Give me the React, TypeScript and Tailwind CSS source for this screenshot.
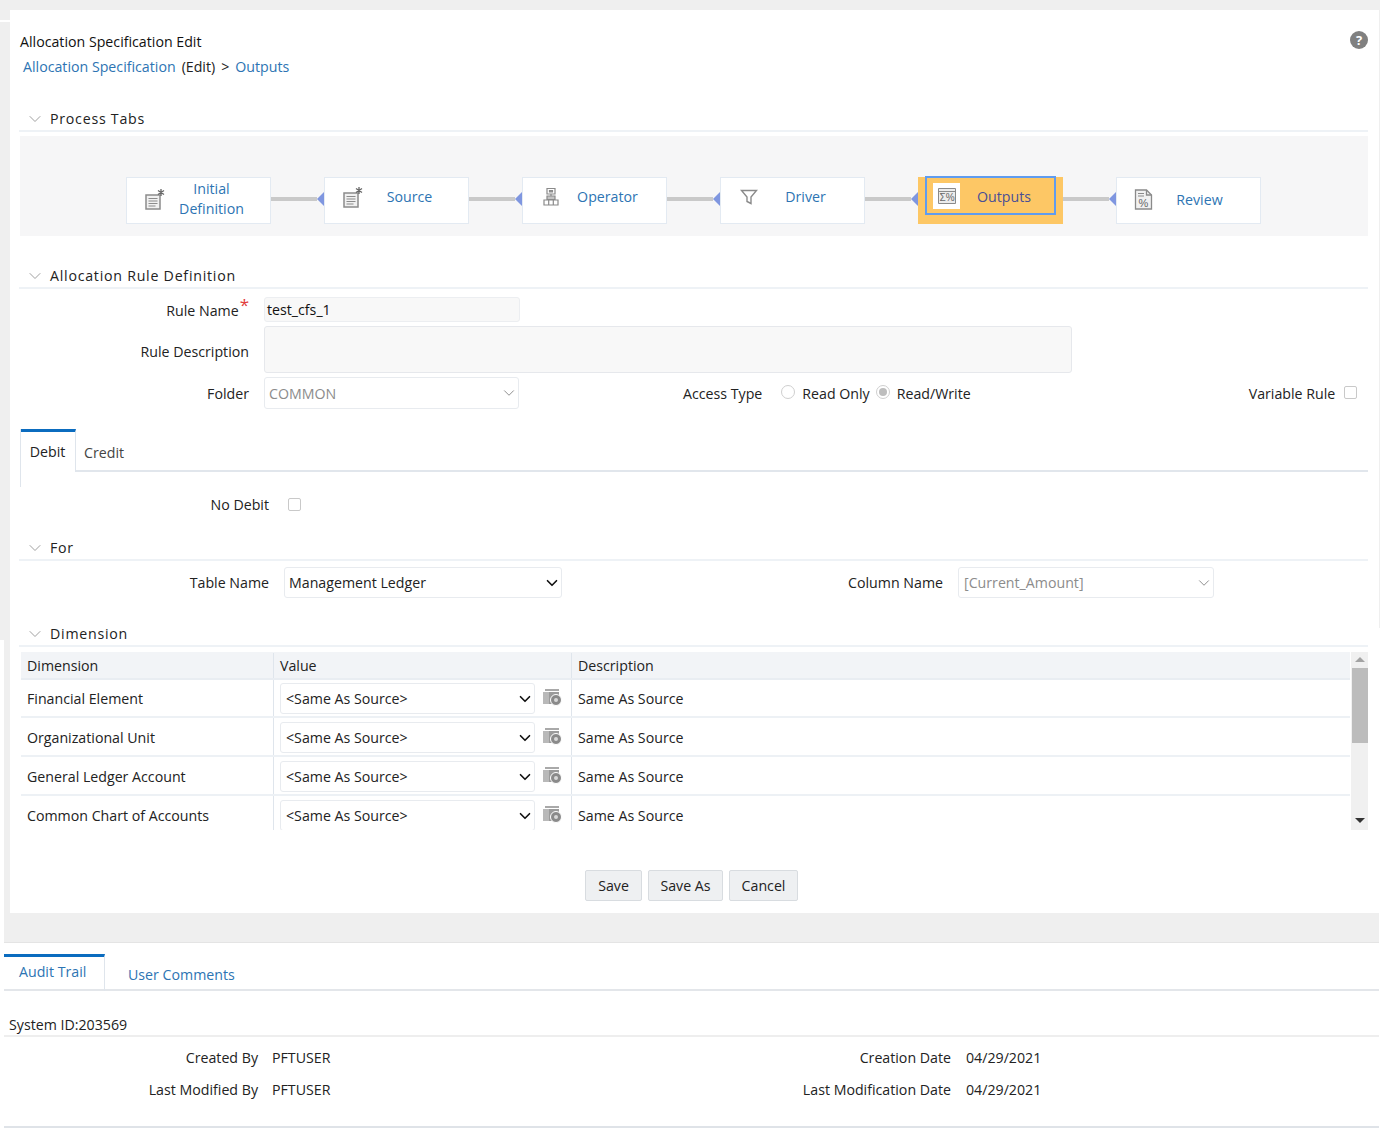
import React from 'react';
import { ChevronDown } from 'lucide-react';

const DocStar = () => (
  <svg width="22" height="22" viewBox="0 0 22 22" fill="none" stroke="#8c8c8c" strokeWidth="1.5">
    <path d="M2 7h14v14H2z" fill="#f1f1f1" />
    <path d="M4.5 10.5h9M4.5 13h9M4.5 15.5h9M4.5 18h7" strokeWidth="1.2" />
    <path d="M17 1v7M14 2.5l6 4M20 2.5l-6 4" stroke="#666" strokeWidth="1.3" />
  </svg>
);

const OperatorIcon = () => (
  <svg width="18" height="20" viewBox="0 0 18 20" fill="#9a9a9a" stroke="#8a8a8a" strokeWidth="1.2">
    <path d="M5 1.5h8v5.5H5z" fill="none" />
    <path d="M7.5 3.5h3v1.5h-3z" />
    <path d="M9 7v2" />
    <path d="M5 9h8v3.5H5z" fill="#c4c4c4" />
    <path d="M2 13h4.700v5H2zM6.700 13h4.600v5H6.700zM11.300 13H16v5h-4.700z" fill="none" />
  </svg>
);

const FunnelIcon = () => (
  <svg width="18" height="16" viewBox="0 0 18 16" fill="none" stroke="#8a8a8a" strokeWidth="1.4">
    <path d="M1.500 1.500h15L11 8v6.500l-4-2V8z" />
  </svg>
);

const OutputsIcon = () => (
  <div className="flex h-[26px] w-[27px] items-center justify-center bg-white">
    <svg width="18" height="16" viewBox="0 0 18 16" fill="none" stroke="#8a8a8a" strokeWidth="1">
      <path d="M.5.5h17v15H.5z" fill="#ececec" />
      <path d="M.5 3.500h17" />
      <text x="1.500" y="13" fontSize="10" fill="#666" stroke="none" fontFamily="'Liberation Sans', sans-serif">Σ%</text>
    </svg>
  </div>
);

const ReviewIcon = () => (
  <svg width="19" height="21" viewBox="0 0 19 21" fill="none" stroke="#8a8a8a" strokeWidth="1.300">
    <path d="M1.500 1h11l5 5v14h-16z" fill="#f1f1f1" />
    <path d="M12.500 1v5h5" />
    <path d="M4 4.500h6M4 7h6" strokeWidth="1" />
    <text x="4.500" y="17.500" fontSize="11" fill="#666" stroke="none" fontFamily="'Liberation Sans', sans-serif">%</text>
  </svg>
);

const FolderGear = () => (
  <svg width="20" height="18" viewBox="0 0 20 18" className="shrink-0">
    <path d="M3 1h14v2H3z" fill="#a9a9a9" />
    <path d="M1 4h16v12H1z" fill="#9b9b9b" />
    <path d="M1 4h6v12H1z" fill="#b9b9b9" />
    <circle cx="14" cy="12" r="5.500" fill="#8a8a8a" stroke="#fff" strokeWidth="1" />
    <circle cx="14" cy="12" r="2" fill="#d8d8d8" />
  </svg>
);

const SectionHeader = ({ title, className }: { title: string; className: string }) => (
  <div className={`flex items-center border-b-2 border-[#eef2f6] ${className}`}>
    <ChevronDown className="ml-[6px] h-[20px] w-[20px] text-[#a0a0a0]" strokeWidth={1.2} />
    <span className="ml-[5px] tracking-[0.75px] text-[#222]">{title}</span>
  </div>
);

const steps = [
  { label: 'Initial Definition', icon: <DocStar />, shift: 'pb-[4px]' },
  { label: 'Source', icon: <DocStar />, shift: 'pb-[8px]' },
  { label: 'Operator', icon: <OperatorIcon />, shift: 'pb-[8px]' },
  { label: 'Driver', icon: <FunnelIcon />, shift: 'pb-[7px]' },
];

const StepBox = ({ label, icon, shift, pad = 'pl-[16px]' }: { label: string; icon: React.ReactNode; shift: string; pad?: string }) => (
  <div className={`flex h-[47px] w-[145px] shrink-0 items-center border border-[#e3eaf2] bg-white text-[#2d74b3] ${shift} ${pad}`}>
    <div className="flex w-[24px] justify-center">{icon}</div>
    <div className="w-[88px] pl-[1px] text-center leading-[20px]">{label}</div>
  </div>
);

const Connector = () => (
  <div className="flex h-[47px] w-[53px] shrink-0 items-center pb-[3px]">
    <div className="h-[4px] w-[46px] bg-[#c9c9c9]" />
    <div className="h-[14px] w-[7px] bg-[#7f96e0] [clip-path:polygon(100%_0,100%_100%,0_50%)]" />
  </div>
);

const SelectBox = ({ value, className, muted }: { value: string; className: string; muted?: boolean }) => (
  <div className={`flex items-center justify-between rounded-[3px] border border-[#e8ebef] bg-white ${className} ${muted ? 'text-[#8c8c8c]' : 'text-[#222]'}`}>
    <span className="pt-[1px]">{value}</span>
    <ChevronDown className={`h-[18px] w-[18px] ${muted ? 'text-[#8c8c8c]' : 'text-[#111]'}`} strokeWidth={muted ? 1.3 : 2.2} />
  </div>
);

const CheckBox = () => <div className="h-[13px] w-[13px] rounded-[2px] border border-[#c9c9c9] bg-white" />;

const rows = [
  { name: 'Financial Element', h: 'h-[38px]', box: 'mt-[3px]', gear: 'mt-[8px]', text: 'pt-[2px]' },
  { name: 'Organizational Unit', h: 'h-[39px]', box: 'mt-[4px]', gear: 'mt-[9px]', text: 'pt-[3px]' },
  { name: 'General Ledger Account', h: 'h-[39px]', box: 'mt-[4px]', gear: 'mt-[9px]', text: 'pt-[3px]' },
  { name: 'Common Chart of Accounts', h: 'h-[34px]', box: 'mt-[4px]', gear: 'mt-[9px]', text: 'pt-[6px]' },
];

const App = () => {
  return (
    <div className="h-[1132px] w-[1380px] overflow-hidden bg-white font-['Open_Sans','Noto_Sans',sans-serif] text-[14.2px] text-[#222]">
      <div className="h-[10px] bg-[#efefef]" />

      <div className="flex h-[903px]">
        {/* left gutter */}
        <div className="flex w-[10px] shrink-0 flex-col">
          <div className="h-[10px] bg-[#efefef]" />
          <div className="h-[2px] bg-white" />
          <div className="h-[618px] bg-[#efefef]" />
          <div className="ml-[4px] flex-1 bg-[#efefef]" />
        </div>

        {/* main card */}
        <div className="w-[1358px] shrink-0 bg-white">
          <div className="flex items-start justify-between pl-[10px] pt-[21px]">
            <div className="leading-[22px] text-[#111]">Allocation Specification Edit</div>
            <div className="flex h-[18px] w-[18px] items-center justify-center rounded-full bg-[#808080] text-[13px] font-bold leading-none text-white">?</div>
          </div>
          <div className="mt-[3px] flex pl-[13px] leading-[22px]">
            <span className="text-[#2d74b3]">Allocation Specification</span>
            <span className="ml-[6px]">(Edit)</span>
            <span className="ml-[6px]">&gt;</span>
            <span className="ml-[6px] text-[#2d74b3]">Outputs</span>
          </div>

          <SectionHeader title="Process Tabs" className="mt-[30px] ml-[9px] h-[24px]" />
          <div className="ml-[10px] mt-[4px] flex h-[100px] items-end bg-[#f6f6f7] pb-[12px] pl-[106px]">
            {steps.map((s) => (
              <React.Fragment key={s.label}>
                <StepBox label={s.label} icon={s.icon} shift={s.shift} />
                <Connector />
              </React.Fragment>
            ))}
            <div className="h-[47px] w-[145px] shrink-0 bg-[#fdc765] pl-[7px]">
              <div className="-mt-[1px] flex h-[39px] w-[131px] items-center border-2 border-[#5f9cf0] pl-[6px] text-[#4a4f96]">
                <OutputsIcon />
                <div className="w-[88px] pt-[2px] text-center">Outputs</div>
              </div>
            </div>
            <Connector />
            <StepBox label="Review" icon={<ReviewIcon />} shift="pb-[2px]" pad="pl-[14px]" />
          </div>

          <SectionHeader title="Allocation Rule Definition" className="mt-[29px] ml-[9px] h-[24px]" />

          {/* rule form */}
          <div className="mt-[8px] flex h-[25px] items-center">
            <div className="w-[239px] pt-[3px] text-right">
              Rule Name<span className="relative -top-[5px] ml-[1px] text-[17px] leading-none text-[#e23b3b]">*</span>
            </div>
            <div className="ml-[15px] flex h-[25px] w-[256px] items-center rounded-[3px] border border-[#eceef1] bg-[#f8f8f8] pl-[2px] pt-[1px] text-[#111]">test_cfs_1</div>
          </div>
          <div className="mt-[4px] flex h-[47px] items-center">
            <div className="w-[239px] pt-[5px] text-right">Rule Description</div>
            <div className="ml-[15px] h-[47px] w-[808px] rounded-[3px] border border-[#e6e8ec] bg-[#f8f8f8]" />
          </div>
          <div className="mt-[4px] flex h-[32px] items-center">
            <div className="w-[239px] pt-[2px] text-right">Folder</div>
            <SelectBox value="COMMON" muted className="ml-[15px] h-[32px] w-[255px] pl-[4px]" />
            <div className="ml-[164px] pt-[2px]">Access Type</div>
            <div className="ml-[19px] h-[14px] w-[14px] -translate-y-[1px] rounded-full border border-[#cfcfcf] bg-white" />
            <div className="ml-[7px] pt-[2px]">Read Only</div>
            <div className="ml-[6px] flex h-[14px] w-[14px] -translate-y-[1px] items-center justify-center rounded-full border border-[#cfcfcf] bg-white">
              <div className="h-[8px] w-[8px] rounded-full bg-[#bdbdbd]" />
            </div>
            <div className="ml-[7px] pt-[2px]">Read/Write</div>
            <div className="ml-[278px] pt-[2px]">Variable Rule</div>
            <div className="ml-[9px] -translate-y-[1px]"><CheckBox /></div>
          </div>

          {/* debit / credit tabs */}
          <div className="ml-[10px] mt-[20px] h-[58px] w-[1349px] border-l border-[#dfe5ec]">
            <div className="flex h-[43px] border-b-2 border-[#e1e6ec]">
              <div className="h-[43px] w-[55px] border-r border-t-[3px] border-r-[#dfe5ec] border-t-[#0b6cbf] bg-white pr-[1px] pt-[9px] text-center text-[#222]">Debit</div>
              <div className="pl-[8px] pt-[13px] text-[#444]">Credit</div>
            </div>
            <div className="h-[15px] border-r border-[#dfe5ec]" />
          </div>
          <div className="mt-[8px] flex h-[20px] items-center">
            <div className="w-[259px] text-right">No Debit</div>
            <div className="ml-[19px] -translate-y-[1px]"><CheckBox /></div>
          </div>

          <SectionHeader title="For" className="mt-[22px] ml-[9px] h-[24px]" />
          <div className="mt-[6px] flex h-[31px] items-center">
            <div className="w-[259px] text-right">Table Name</div>
            <SelectBox value="Management Ledger" className="ml-[15px] h-[31px] w-[278px] pl-[4px]" />
            <div className="w-[381px] text-right">Column Name</div>
            <SelectBox value="[Current_Amount]" muted className="ml-[15px] h-[31px] w-[256px] pl-[5px]" />
          </div>

          <SectionHeader title="Dimension" className="mt-[24px] ml-[9px] h-[25px]" />

          {/* dimension table */}
          <div className="ml-[11px] mt-[5px] flex h-[178px] w-[1348px]">
            <div className="w-[1329px] overflow-hidden">
              <div className="flex h-[28px] items-center border-b-2 border-[#e9edf2] bg-[#f2f4f7] pt-[1px]">
                <div className="w-[252px] pl-[6px]">Dimension</div>
                <div className="flex h-full w-[298px] items-center border-l border-[#dfe5ec] pl-[6px]">Value</div>
                <div className="flex h-full flex-1 items-center border-l border-[#dfe5ec] pl-[6px]">Description</div>
              </div>
              {rows.map((r) => (
                <div key={r.name} className={`flex border-b-2 border-[#edf1f5] last:border-b-0 ${r.h}`}>
                  <div className={`flex w-[252px] items-center pl-[6px] ${r.text}`}>{r.name}</div>
                  <div className="flex w-[298px] items-start border-l border-[#dfe5ec] pl-[6px]">
                    <SelectBox value="<Same As Source>" className={`${r.box} h-[31px] w-[255px] shrink-0 pl-[5px]`} />
                    <div className={`ml-[7px] ${r.gear}`}><FolderGear /></div>
                  </div>
                  <div className={`flex flex-1 items-center border-l border-[#dfe5ec] pl-[6px] ${r.text}`}>Same As Source</div>
                </div>
              ))}
            </div>
            <div className="ml-[1px] flex w-[18px] flex-col items-center bg-[#f0f0f0] pt-[5px]">
              <div className="h-0 w-0 border-x-[5px] border-b-[5px] border-x-transparent border-b-[#a3a3a3]" />
              <div className="mt-[6px] h-[75px] w-[16px] bg-[#bcbcbc]" />
              <div className="mt-auto mb-[7px] h-0 w-0 border-x-[5px] border-t-[5px] border-x-transparent border-t-[#333]" />
            </div>
          </div>

          <div className="ml-[575px] mt-[40px] flex gap-[6px]">
            <button className="h-[31px] w-[57px] rounded-[2px] border border-[#d8dce0] bg-[#eef0f2] pt-[1px] text-[#222]">Save</button>
            <button className="h-[31px] w-[75px] rounded-[2px] border border-[#d8dce0] bg-[#eef0f2] pt-[1px] text-[#222]">Save As</button>
            <button className="h-[31px] w-[69px] rounded-[2px] border border-[#d8dce0] bg-[#eef0f2] pt-[1px] text-[#222]">Cancel</button>
          </div>
        </div>

        <div className="w-[11px] shrink-0 bg-white" />
        <div className="h-[618px] w-[1px] shrink-0 bg-[#efefef]" />
      </div>

      {/* grey band + audit section */}
      <div className="ml-[4px] h-[30px] w-[1375px] border-b border-[#e4e4e4] bg-[#efefef]" />
      <div className="ml-[4px] w-[1375px]">
        <div className="mt-[11px] flex h-[37px] border-b-2 border-[#e3e6ea] text-[#2d74b3]">
          <div className="h-[37px] w-[101px] border-r border-t-[3px] border-r-[#dfe5ec] border-t-[#0b6cbf] pl-[15px] pt-[4px]">Audit Trail</div>
          <div className="pl-[23px] pt-[10px]">User Comments</div>
        </div>
        <div className="flex h-[46px] items-end border-b-2 border-[#eeeeee] pl-[5px]">
          <span className="leading-[20px]">System ID:203569</span>
        </div>
        <div className="mt-[11px] flex h-[20px] items-center">
          <div className="w-[254px] text-right">Created By</div>
          <div className="ml-[14px] w-[300px]">PFTUSER</div>
          <div className="w-[379px] text-right">Creation Date</div>
          <div className="ml-[15px]">04/29/2021</div>
        </div>
        <div className="mt-[12px] flex h-[20px] items-center">
          <div className="w-[254px] text-right">Last Modified By</div>
          <div className="ml-[14px] w-[300px]">PFTUSER</div>
          <div className="w-[379px] text-right">Last Modification Date</div>
          <div className="ml-[15px]">04/29/2021</div>
        </div>
        <div className="mt-[26px] border-b-2 border-[#dfe3e8]" />
      </div>
    </div>
  );
};

export default App;
